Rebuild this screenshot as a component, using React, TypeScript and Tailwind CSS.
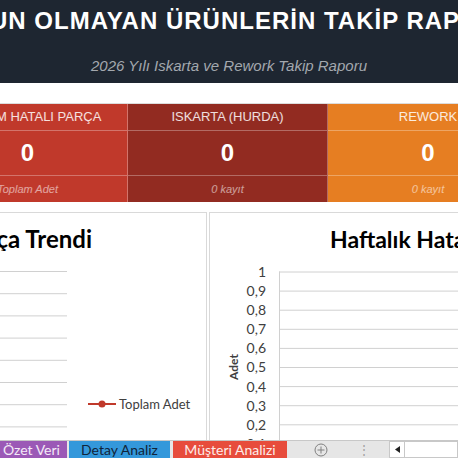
import React from "react";

const cards = [
  { label: "TOPLAM HATALI PARÇA", value: "0", note: "Toplam Adet", bg: "bg-[#c0392b]" },
  { label: "ISKARTA (HURDA)", value: "0", note: "0 kayıt", bg: "bg-[#922b21]" },
  { label: "REWORK", value: "0", note: "0 kayıt", bg: "bg-[#e67e22]" },
];

const ticks = ["1", "0,9", "0,8", "0,7", "0,6", "0,5", "0,4", "0,3", "0,2", "0,1", "0"];

function TrendChart() {
  const lines = Array.from({ length: 9 }, (_, i) => 0.5 + i * 22.2);
  return (
    <div className="w-[207px] shrink-0 h-full border-r border-t border-[#d9d9d9] overflow-hidden flex flex-col" style={{ fontFamily: "Lato, 'Open Sans', sans-serif" }}>
      <div className="w-[92px] shrink-0 pt-[14px] flex justify-end overflow-hidden whitespace-nowrap">
        <span className="shrink-0 text-[24px] leading-[24px] font-bold text-black">Aylık Hatalı Parça Trendi</span>
      </div>
      <div className="flex shrink-0 mt-[20px]">
        <svg width="67" height="200" className="shrink-0">
          {lines.map((y) => (
            <line key={y} x1="0" x2="67" y1={y} y2={y} stroke="#d0d0d0" strokeWidth="1" />
          ))}
        </svg>
        <div className="ml-[21px] mt-[126px] h-[14px] shrink-0 flex items-center gap-[3px]">
          <svg width="28" height="10">
            <line x1="0" x2="28" y1="5" y2="5" stroke="#c0392b" strokeWidth="2" />
            <circle cx="14" cy="5" r="3.5" fill="#c0392b" />
          </svg>
          <span className="text-[13px] leading-[14px] text-[#404040] whitespace-nowrap">Toplam Adet</span>
        </div>
      </div>
    </div>
  );
}

function WeeklyChart() {
  return (
    <div className="ml-[2px] flex-1 h-full border-l border-t border-[#d9d9d9] overflow-hidden flex flex-col" style={{ fontFamily: "Lato, 'Open Sans', sans-serif" }}>
      <div className="pl-[120px] pt-[14px] h-[49px] shrink-0 whitespace-nowrap">
        <span className="text-[23px] leading-[24px] font-bold text-black">Haftalık Hata Dağılımı</span>
      </div>
      <div className="flex shrink-0">
        <div className="ml-[17px] w-[14px] h-[210px] shrink-0 flex items-center justify-center">
          <span className="-rotate-90 text-[12px] font-bold text-[#404040] whitespace-nowrap">Adet</span>
        </div>
        <div className="w-[25px] shrink-0 flex flex-col items-end">
          {ticks.map((t) => (
            <div key={t} className="h-[19.1px] leading-[19.1px] text-[14px] text-[#404040] whitespace-nowrap">{t}</div>
          ))}
        </div>
        <svg width="200" height="210" className="ml-[13px] shrink-0">
          <line x1="0.5" x2="0.5" y1="9.5" y2="210" stroke="#d0d0d0" strokeWidth="1" />
          {ticks.map((t, i) => (
            <line key={t} x1="0" x2="200" y1={10 + i * 19.1} y2={10 + i * 19.1} stroke="#d0d0d0" strokeWidth="1" />
          ))}
        </svg>
      </div>
    </div>
  );
}

export default function App() {
  return (
    <div className="w-[458px] h-[458px] overflow-hidden bg-white flex flex-col">
      <div className="h-[83px] shrink-0 bg-[#1e2631] flex flex-col items-center overflow-hidden" style={{ fontFamily: "'Liberation Sans', Arial, sans-serif" }}>
        <div className="w-full mt-[7px] h-[28px] flex justify-start overflow-hidden whitespace-nowrap">
          <span className="shrink-0 ml-[-65px] text-[24px] leading-[28px] font-bold tracking-[1px] text-white">UYGUN OLMAYAN ÜRÜNLERİN TAKİP RAPORU</span>
        </div>
        <div className="mt-[23px] text-[15px] leading-[16px] italic text-[#a3a8ae]">2026 Yılı Iskarta ve Rework Takip Raporu</div>
      </div>

      <div className="h-[20px] shrink-0" />

      <div className="h-[99px] shrink-0 flex ml-[-72px] border-t border-[#dcdcdc]" style={{ fontFamily: "'Liberation Sans', Arial, sans-serif" }}>
        {cards.map((c, i) => (
          <div key={c.label} className={`w-[200px] shrink-0 flex flex-col ${c.bg} ${i < 2 ? "border-r border-white/30" : ""}`}>
            <div className="h-[27px] flex items-center justify-center border-b border-white/30 text-[13px] text-white/85 whitespace-nowrap">{c.label}</div>
            <div className="h-[45px] flex items-center justify-center border-b border-white/30 text-[24px] font-bold text-white">{c.value}</div>
            <div className="flex-1 flex items-center justify-center text-[11px] italic text-white/55">{c.note}</div>
          </div>
        ))}
      </div>

      <div className="h-[10px] shrink-0" />

      <div className="flex-1 flex min-h-0">
        <TrendChart />
        <WeeklyChart />
      </div>

      <div className="h-[18px] shrink-0 bg-[#e6e6e6] border-t border-[#c8c8c8] flex items-stretch text-[14px] leading-[17px]" style={{ fontFamily: "Lato, 'Open Sans', sans-serif" }}>
        <div className="w-[67px] shrink-0 bg-[#9b59b6] text-[#f3eaf7] pl-[3px] whitespace-nowrap">Özet Veri</div>
        <div className="ml-[2px] w-[101px] shrink-0 bg-[#3498db] text-[#10243a] text-center whitespace-nowrap">Detay Analiz</div>
        <div className="ml-[3px] w-[114px] shrink-0 bg-[#e74c3c] text-[#fdecea] text-center whitespace-nowrap">Müşteri Analizi</div>
        <div className="w-[68px] shrink-0 flex items-center justify-center">
          <svg width="14" height="14" viewBox="0 0 14 14">
            <circle cx="7" cy="7" r="6" fill="none" stroke="#808080" strokeWidth="1" />
            <line x1="7" x2="7" y1="3.5" y2="10.5" stroke="#808080" strokeWidth="1" />
            <line x1="3.5" x2="10.5" y1="7" y2="7" stroke="#808080" strokeWidth="1" />
          </svg>
        </div>
        <div className="w-[18px] shrink-0 flex items-center justify-center text-[#a0a0a0] text-[12px]">⋮</div>
        <div className="flex-1 ml-[16px] bg-white border border-[#c8c8c8] flex">
          <div className="w-[15px] border-r border-[#c8c8c8] flex items-center justify-center">
            <svg width="5" height="7" viewBox="0 0 5 7"><polygon points="5,0 0,3.5 5,7" fill="#222" /></svg>
          </div>
        </div>
      </div>
    </div>
  );
}
